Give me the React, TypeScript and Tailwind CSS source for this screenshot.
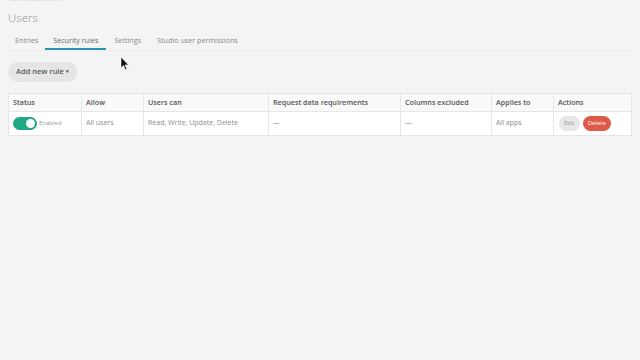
import React from "react";

const font = { fontFamily: '"Open Sans", "Noto Sans", sans-serif' };

export default function App() {
  const cols = [
    { h: "Status", w: "w-[73px]" },
    { h: "Allow", w: "w-[62px]" },
    { h: "Users can", w: "w-[125px]" },
    { h: "Request data requirements", w: "w-[132px]" },
    { h: "Columns excluded", w: "w-[91px]" },
    { h: "Applies to", w: "w-[62px]" },
    { h: "Actions", w: "flex-1" },
  ];
  return (
    <div className="relative h-[360px] w-[640px] overflow-hidden bg-[#f5f4f4]" style={font}>
      <div className="px-2">
        <div className="mt-[-7px] h-[9px] text-[8px] leading-[9px] text-[#cfcfcf]">Administration</div>
        <div className="mt-[7px] text-[11.5px] font-light leading-[17px] text-[#8e8e8e]">Users</div>
        <div className="mt-[4px] flex h-[21px] border-b border-[#ebebeb]">
          <div className="flex items-center px-[7px] text-[7.2px] text-[#8a8a8a]">Entries</div>
          <div className="flex items-center border-b-2 border-[#2597b0] px-[8px] pt-[2px] text-[7.2px] text-[#6a6a6a]">Security rules</div>
          <div className="flex items-center px-[8px] text-[7.2px] text-[#8a8a8a]">Settings</div>
          <div className="flex items-center px-[8px] text-[7.2px] text-[#8a8a8a]">Studio user permissions</div>
        </div>
        <div className="mt-[11px] flex">
          <div className="flex h-[20px] items-center rounded-full bg-[#e6e5e5] px-[8px] text-[7.5px] font-semibold text-[#5a5a5a]">
            Add new rule <span className="ml-[2px] text-[5px]">▾</span>
          </div>
        </div>
        <div className="mt-[11px] w-[624px] border border-[#e6e6e6] bg-white">
          <div className="flex h-[18px] border-b border-[#e6e6e6] bg-[#f9f9f9]">
            {cols.map((c, i) => (
              <div
                key={c.h}
                className={`${c.w} flex items-center px-[4px] text-[7.2px] font-semibold text-[#555] ${i < cols.length - 1 ? "border-r border-[#e6e6e6]" : ""}`}
              >
                {c.h}
              </div>
            ))}
          </div>
          <div className="flex h-[23px] text-[7px] text-[#8c8c8c]">
            <div className="flex w-[73px] items-center border-r border-[#e6e6e6] px-[4px]">
              <div className="flex h-[13px] w-[24px] items-center justify-end rounded-full bg-[#1ea886] pr-[2px]">
                <div className="h-[9px] w-[9px] rounded-full bg-white" />
              </div>
              <span className="ml-[2px] text-[6px] text-[#999]">Enabled</span>
            </div>
            <div className="flex w-[62px] items-center border-r border-[#e6e6e6] px-[4px]">All users</div>
            <div className="flex w-[125px] items-center border-r border-[#e6e6e6] px-[4px]">Read, Write, Update, Delete</div>
            <div className="flex w-[132px] items-center border-r border-[#e6e6e6] px-[4px]">—</div>
            <div className="flex w-[91px] items-center border-r border-[#e6e6e6] px-[4px]">—</div>
            <div className="flex w-[62px] items-center border-r border-[#e6e6e6] px-[4px]">All apps</div>
            <div className="flex flex-1 items-center gap-[3px] px-[5px]">
              <div className="flex h-[15px] items-center rounded-full bg-[#e7e7e7] px-[5px] text-[6px] text-[#9a9a9a]">Edit</div>
              <div className="flex h-[15px] items-center rounded-full bg-[#de5a48] px-[5px] text-[6px] text-white">Delete</div>
            </div>
          </div>
        </div>
      </div>
      <svg className="absolute left-[120px] top-[56px]" width="9" height="15" viewBox="0 0 9 15">
        <path d="M1 1 L1 12 L3.5 9.5 L5.5 14 L7 13.3 L5 9 L8.5 9 Z" fill="#111" stroke="#fff" strokeWidth="0.6" />
      </svg>
    </div>
  );
}
